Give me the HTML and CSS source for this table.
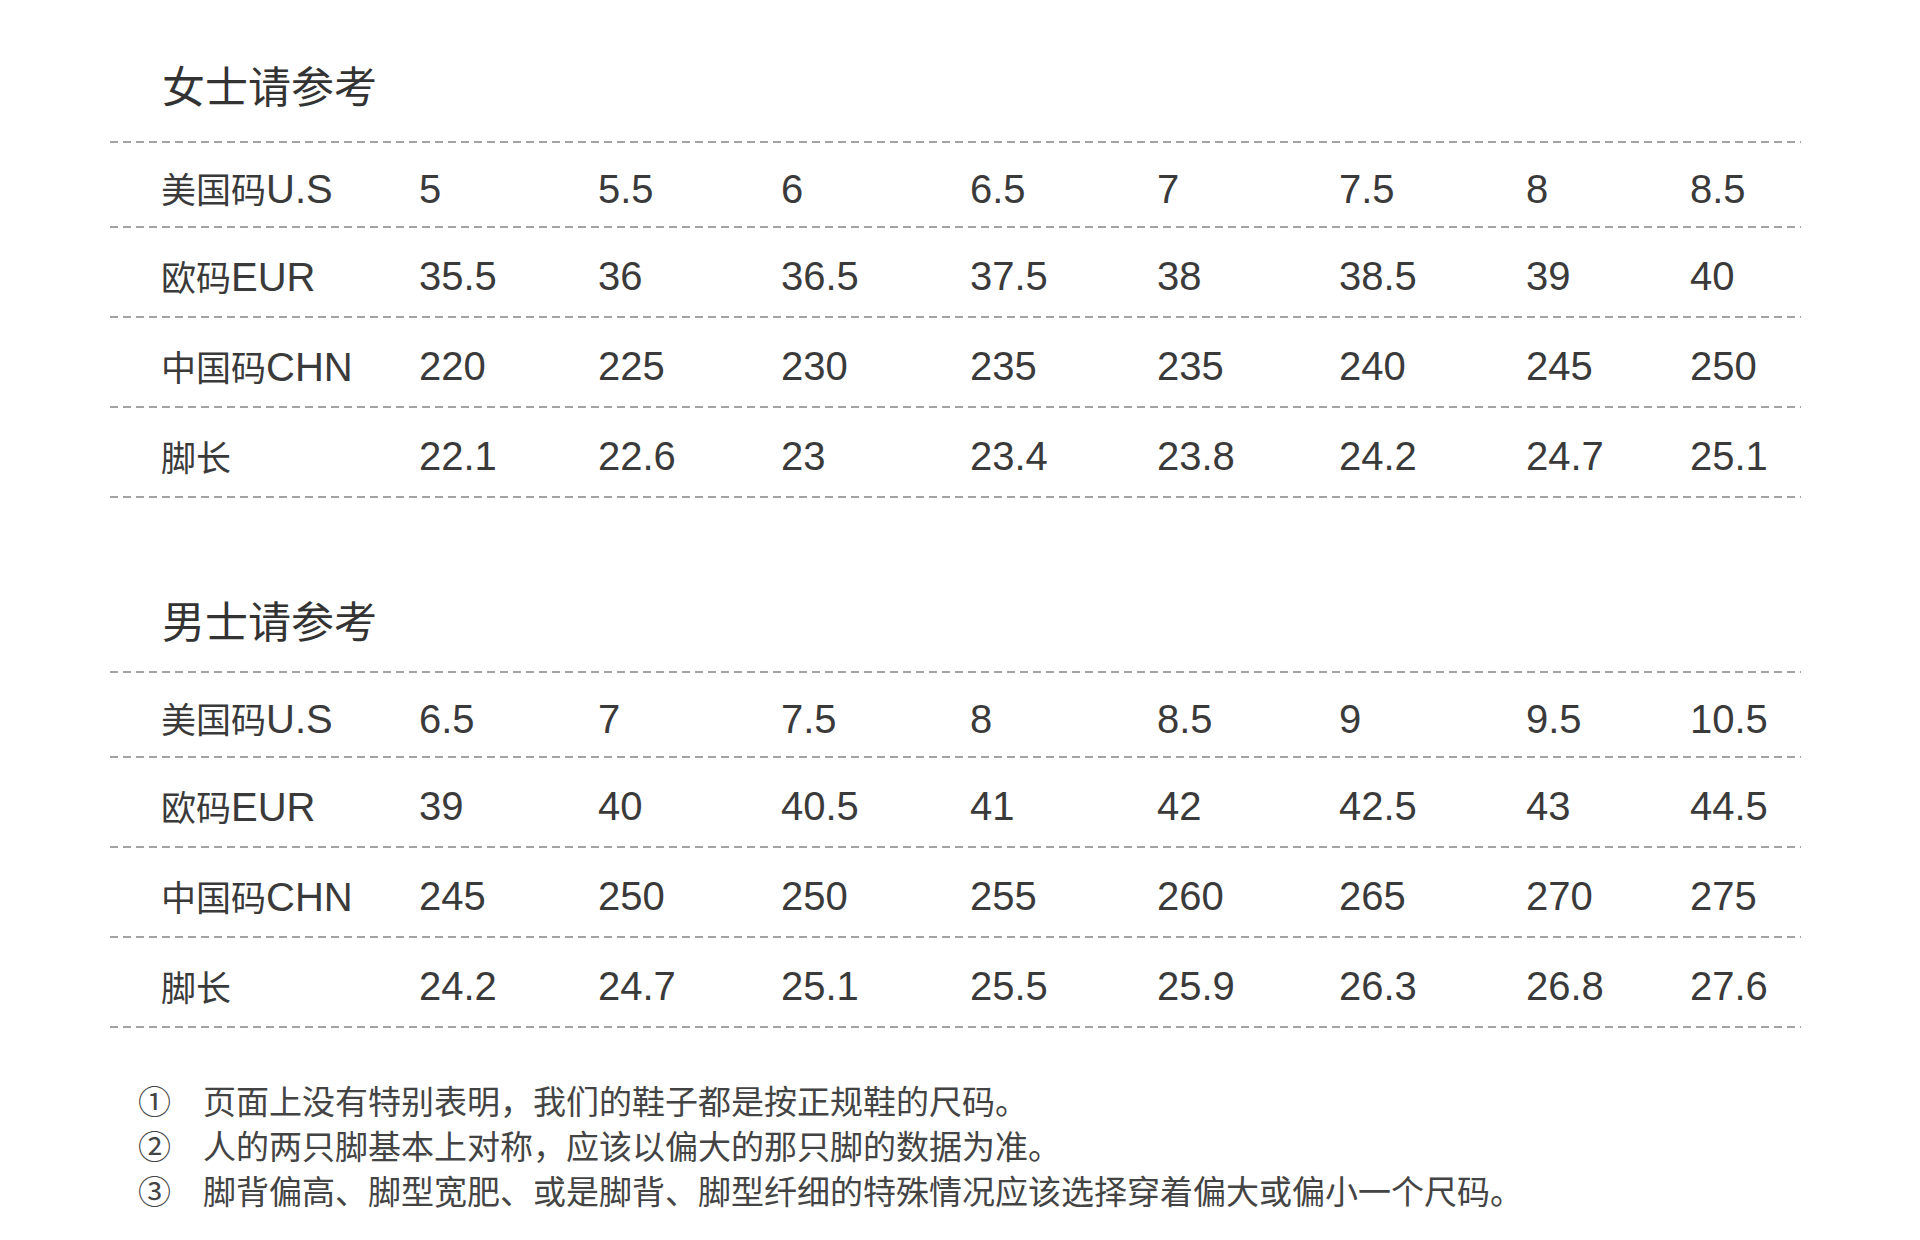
FILE: index.html
```html
<!DOCTYPE html>
<html lang="zh-CN">
<head>
<meta charset="utf-8">
<title>尺码参考</title>
<link rel="stylesheet" href="styles.css">
</head>
<body>
<div class="page">
  <section class="section">
    <h2 class="title">女士请参考</h2>
    <div class="table">
      <div class="row">
        <div class="cell label"><span class="zh">美国码</span>U.S</div>
        <div class="cell">5</div><div class="cell">5.5</div><div class="cell">6</div><div class="cell">6.5</div>
        <div class="cell">7</div><div class="cell">7.5</div><div class="cell">8</div><div class="cell">8.5</div>
      </div>
      <div class="row">
        <div class="cell label"><span class="zh">欧码</span>EUR</div>
        <div class="cell">35.5</div><div class="cell">36</div><div class="cell">36.5</div><div class="cell">37.5</div>
        <div class="cell">38</div><div class="cell">38.5</div><div class="cell">39</div><div class="cell">40</div>
      </div>
      <div class="row">
        <div class="cell label"><span class="zh">中国码</span>CHN</div>
        <div class="cell">220</div><div class="cell">225</div><div class="cell">230</div><div class="cell">235</div>
        <div class="cell">235</div><div class="cell">240</div><div class="cell">245</div><div class="cell">250</div>
      </div>
      <div class="row">
        <div class="cell label"><span class="zh">脚长</span></div>
        <div class="cell">22.1</div><div class="cell">22.6</div><div class="cell">23</div><div class="cell">23.4</div>
        <div class="cell">23.8</div><div class="cell">24.2</div><div class="cell">24.7</div><div class="cell">25.1</div>
      </div>
    </div>
  </section>

  <section class="section section-men">
    <h2 class="title">男士请参考</h2>
    <div class="table">
      <div class="row">
        <div class="cell label"><span class="zh">美国码</span>U.S</div>
        <div class="cell">6.5</div><div class="cell">7</div><div class="cell">7.5</div><div class="cell">8</div>
        <div class="cell">8.5</div><div class="cell">9</div><div class="cell">9.5</div><div class="cell">10.5</div>
      </div>
      <div class="row">
        <div class="cell label"><span class="zh">欧码</span>EUR</div>
        <div class="cell">39</div><div class="cell">40</div><div class="cell">40.5</div><div class="cell">41</div>
        <div class="cell">42</div><div class="cell">42.5</div><div class="cell">43</div><div class="cell">44.5</div>
      </div>
      <div class="row">
        <div class="cell label"><span class="zh">中国码</span>CHN</div>
        <div class="cell">245</div><div class="cell">250</div><div class="cell">250</div><div class="cell">255</div>
        <div class="cell">260</div><div class="cell">265</div><div class="cell">270</div><div class="cell">275</div>
      </div>
      <div class="row">
        <div class="cell label"><span class="zh">脚长</span></div>
        <div class="cell">24.2</div><div class="cell">24.7</div><div class="cell">25.1</div><div class="cell">25.5</div>
        <div class="cell">25.9</div><div class="cell">26.3</div><div class="cell">26.8</div><div class="cell">27.6</div>
      </div>
    </div>
  </section>

  <ul class="notes">
    <li class="note"><span class="num">①</span><span class="text">页面上没有特别表明，我们的鞋子都是按正规鞋的尺码。</span></li>
    <li class="note"><span class="num">②</span><span class="text">人的两只脚基本上对称，应该以偏大的那只脚的数据为准。</span></li>
    <li class="note"><span class="num">③</span><span class="text">脚背偏高、脚型宽肥、或是脚背、脚型纤细的特殊情况应该选择穿着偏大或偏小一个尺码。</span></li>
  </ul>
</div>
</body>
</html>
```

FILE: styles.css
```css
html, body {
  margin: 0;
  padding: 0;
  background: #ffffff;
}

body {
  width: 1920px;
  height: 1240px;
  overflow: hidden;
  color: #3a3a3a;
  font-family: "Liberation Sans", "Noto Sans CJK SC", sans-serif;
}

.page {
  padding-top: 54px;
}

.section-men {
  margin-top: 91px;
}

.title {
  margin: 0 0 27px 162px;
  font-family: "Noto Sans CJK SC", sans-serif;
  font-size: 43px;
  font-weight: 400;
  line-height: 60px;
  color: #333333;
}

.section-men .title {
  margin-bottom: 22px;
}

.table {
  margin-left: 110px;
  width: 1691px;
  padding-top: 2px;
  background-image: repeating-linear-gradient(to right, #a3a3a3 0 8px, transparent 8px 13px);
  background-size: 100% 2px;
  background-repeat: no-repeat;
  background-position: left top;
}

.row {
  box-sizing: border-box;
  height: 90px;
  padding: 8px 0 2px 51px;
  display: grid;
  grid-template-columns: 258px 179px 183px 189px 187px 182px 187px 164px 1fr;
  align-items: center;
  background-image: repeating-linear-gradient(to right, #a3a3a3 0 8px, transparent 8px 13px);
  background-size: 100% 2px;
  background-repeat: no-repeat;
  background-position: left bottom;
}

.row:first-child {
  height: 85px;
}

.cell {
  font-size: 40px;
  line-height: 46px;
  white-space: nowrap;
}

.zh {
  font-family: "Noto Sans CJK SC", sans-serif;
  font-size: 35px;
}

.notes {
  list-style: none;
  margin: 50px 0 0 0;
  padding: 0 0 0 138px;
  font-family: "Noto Sans CJK SC", sans-serif;
  font-size: 33px;
  line-height: 45px;
  color: #444444;
}

.note {
  display: flex;
}

.num {
  width: 65px;
  flex: none;
}
```
